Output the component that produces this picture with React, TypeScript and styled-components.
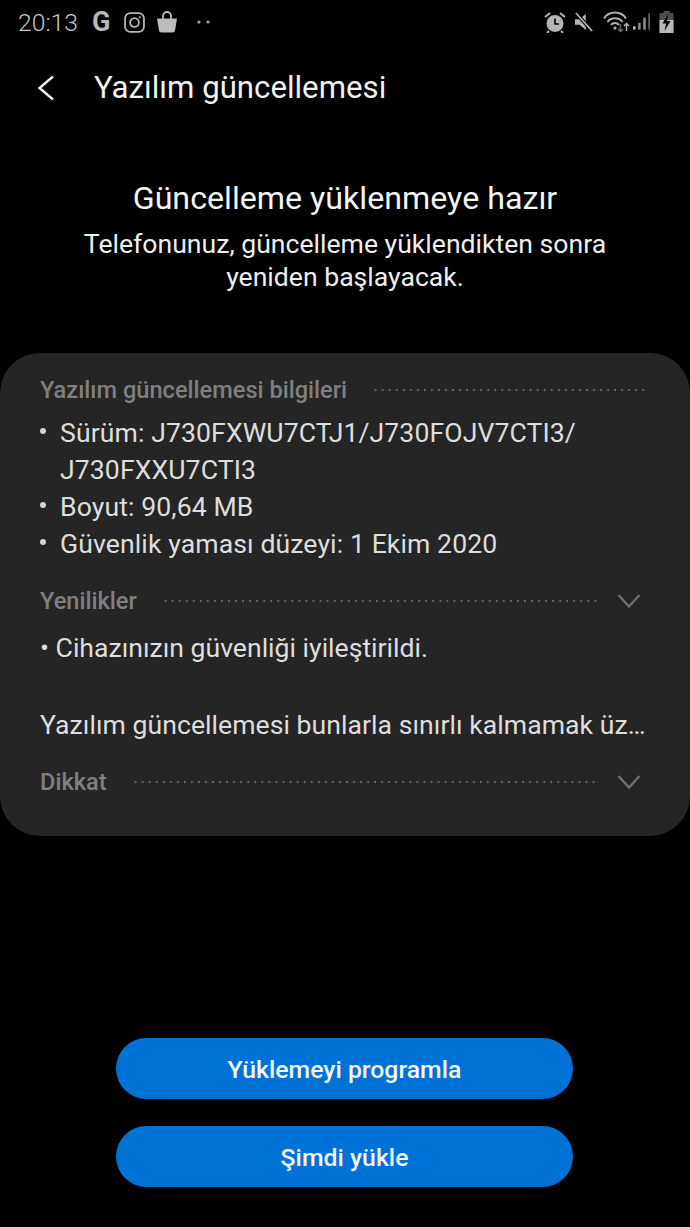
import React from "react";
import styled, { createGlobalStyle } from "styled-components";

const Global = createGlobalStyle`
  html, body { margin: 0; padding: 0; background: #000; }
  body { font-family: Roboto, "Liberation Sans", sans-serif; }
`;

const Page = styled.div`
  width: 690px; height: 1227px; background: #000; display: flex; flex-direction: column; overflow: hidden;
`;
const StatusBar = styled.div`
  height: 44px; display: flex; align-items: center; justify-content: space-between; padding: 0 16px 0 18px; color: #bdbdbd;
`;
const StatusGroup = styled.div`
  display: flex; align-items: center; gap: ${(p: { $gap: number }) => p.$gap}px;
`;
const Time = styled.span`
  font-size: 24.7px; font-weight: 300; color: #c8c8c8; margin-right: 2px;
`;
const GLetter = styled.span`
  font-size: 27px; font-weight: 700; color: #b8b8b8; line-height: 1; width: 20px;
`;
const TitleBar = styled.div`
  height: 88px; display: flex; align-items: center; padding-left: 35px; gap: 38px;
`;
const Title = styled.h1`
  margin: 0; font-size: 31.2px; font-weight: 400; color: #f2f2f2; line-height: 1;
`;
const Intro = styled.div`
  padding-top: 47px; text-align: center; color: #f5f5f5; height: 221px; box-sizing: border-box;
`;
const Heading = styled.div`
  font-size: 32.2px; line-height: 38px; margin-bottom: 10px;
`;
const IntroText = styled.div`
  font-size: 26.6px; line-height: 33px; color: #eee;
`;
const Card = styled.div`
  height: 483px; box-sizing: border-box; background: #252525; border-radius: 40px; padding: 24px 40px 0 40px; color: #dedede;
`;
const SectionHead = styled.div<{ $right: number; $top: number }>`
  display: flex; align-items: center; height: 26px;
  margin-right: ${(p) => p.$right}px;
  margin-top: ${(p) => p.$top}px;
`;
const SectionLabel = styled.span`
  font-size: 23.6px; font-weight: 500; color: #808080; white-space: nowrap;
`;
const Dots = styled.span`
  flex: 1; margin-left: 25px; height: 2px;
  background-image: radial-gradient(circle, #666 1px, transparent 1.2px);
  background-size: 7.05px 2px;
`;
const Chevron = styled.svg`
  width: 24px; height: 16px; margin-left: 19px; flex: none;
`;
const List = styled.ul`
  list-style: none; margin: 11px 0 0; padding: 0;
`;
const Item = styled.li`
  position: relative; padding-left: 20px; font-size: 26.6px; line-height: 37px; letter-spacing: 0.1px;
  &::before {
    content: ""; position: absolute; left: 0; top: 14px; width: 6px; height: 6px; border-radius: 50%; background: #d5d5d5;
  }
`;
const Body = styled.div<{ $top: number; $spacing: number }>`
  font-size: 26.6px; line-height: 36px; white-space: nowrap;
  letter-spacing: ${(p) => p.$spacing}px;
  margin-top: ${(p) => p.$top}px;
`;
const Actions = styled.div`
  margin-top: 202px; margin-right: 1px; display: flex; flex-direction: column; align-items: center; gap: 27px;
`;
const Button = styled.button`
  width: 457px; height: 61px; border: 0; border-radius: 31px; background: #0072d6; color: #f0f6fb;
  font-family: inherit; font-size: 24.8px; font-weight: 500; padding: 2px 0 0;
`;

const ChevronDown = () => (
  <Chevron viewBox="0 0 24 16" fill="none" stroke="#6f6f6f" strokeWidth="2.4">
    <path d="M1.5 2 L12 13.5 L22.500 2" />
  </Chevron>
);

export default function App() {
  return (
    <Page>
      <Global />
      <StatusBar>
        <StatusGroup $gap={12}>
          <Time>20:13</Time>
          <GLetter>G</GLetter>
          <svg width="21" height="21" viewBox="0 0 20 20" fill="none" stroke="#b8b8b8" strokeWidth="1.7">
            <rect x="1" y="1" width="18" height="18" rx="5" />
            <circle cx="10" cy="10" r="4.2" />
            <circle cx="15" cy="5" r="1" fill="#b8b8b8" stroke="none" />
          </svg>
          <svg width="20" height="22" viewBox="0 0 20 22" fill="#bcbcbc">
            <path d="M0 7.500h20l-2 12a2.500 2.500 0 0 1-2.500 2h-11a2.500 2.500 0 0 1-2.500-2z" />
            <path d="M6 8V5a4 4 0 0 1 8 0v3" fill="none" stroke="#bcbcbc" strokeWidth="1.8" />
          </svg>
          <svg width="16" height="4" viewBox="0 0 16 4" fill="#a8a8a8" style={{ marginLeft: 7 }}>
            <circle cx="3" cy="2" r="1.6" />
            <circle cx="12" cy="2" r="1.6" />
          </svg>
        </StatusGroup>
        <StatusGroup $gap={9}>
          <svg width="22" height="22" viewBox="0 0 22 22">
            <circle cx="11" cy="12.500" r="8.500" fill="#b4b4b4" />
            <path d="M11 7.500v5.500h4" fill="none" stroke="#000" strokeWidth="1.6" />
            <path d="M1 6l5-4M21 6l-5-4M5 20l-2 2M17 20l2 2" stroke="#b4b4b4" strokeWidth="2" />
          </svg>
          <svg width="18" height="22" viewBox="0 0 20 22">
            <path d="M0 8h5l7-6v18l-7-6H0z" fill="#b4b4b4" />
            <path d="M1 1l18 20" stroke="#000" strokeWidth="4" />
            <path d="M1 1l18 20" stroke="#b4b4b4" strokeWidth="2" />
          </svg>
          <svg width="28" height="22" viewBox="0 0 26 22" fill="none" stroke="#b4b4b4" strokeWidth="2">
            <path d="M1 7.500C6-.5 18-.5 23 7.500" />
            <path d="M4.500 11c3.500-5 11.500-5 15 0" />
            <path d="M8 14c2-2.600 6-2.600 8 0" />
            <circle cx="12" cy="17" r="1.600" fill="#b4b4b4" stroke="none" />
            <path d="M17.500 13v7M15 18l2.500 2.500L20 18" stroke="#6a6a6a" strokeWidth="1.500" />
            <path d="M23.500 20v-7M21 15l2.500-2.500L26 15" strokeWidth="1.500" />
          </svg>
          <svg width="17" height="22" viewBox="0 0 20 22" fill="#b4b4b4" style={{ marginLeft: -6 }}>
            <rect x="0" y="16" width="3" height="4" />
            <rect x="6" y="12" width="3" height="8" fill="#8a8a8a" />
            <rect x="12" y="6" width="3" height="14" fill="#8a8a8a" />
            <rect x="18" y="1" width="2" height="19" fill="#666" />
          </svg>
          <svg width="15" height="22" viewBox="0 0 14 22">
            <path d="M4 0h6v2h4v20H0V2h4z" fill="#4e4e4e" />
            <path d="M0 9h14v13H0z" fill="#b8b8b8" />
            <path d="M8.500 3L3 12.500h3.500L5 20l6-10H7.500z" fill="#000" />
          </svg>
        </StatusGroup>
      </StatusBar>
      <TitleBar>
        <svg width="21" height="26" viewBox="0 0 21 26" fill="none" stroke="#f2f2f2" strokeWidth="2.4">
          <path d="M18 1.500 L4.500 13 L18 24.500" />
        </svg>
        <Title>Yazılım güncellemesi</Title>
      </TitleBar>
      <Intro>
        <Heading>Güncelleme yüklenmeye hazır</Heading>
        <IntroText>
          Telefonunuz, güncelleme yüklendikten sonra
          <br />
          yeniden başlayacak.
        </IntroText>
      </Intro>
      <Card>
        <SectionHead $right={2} $top={0}>
          <SectionLabel>Yazılım güncellemesi bilgileri</SectionLabel>
          <Dots />
        </SectionHead>
        <List>
          <Item>
            Sürüm: J730FXWU7CTJ1/J730FOJV7CTI3/
            <br />
            J730FXXU7CTI3
          </Item>
          <Item>Boyut: 90,64 MB</Item>
          <Item>Güvenlik yaması düzeyi: 1 Ekim 2020</Item>
        </List>
        <SectionHead $right={9} $top={26}>
          <SectionLabel>Yenilikler</SectionLabel>
          <Dots />
          <ChevronDown />
        </SectionHead>
        <Body $top={16} $spacing={0}>• Cihazınızın güvenliği iyileştirildi.</Body>
        <Body $top={41} $spacing={0.04}>Yazılım güncellemesi bunlarla sınırlı kalmamak üz…</Body>
        <SectionHead $right={9} $top={26}>
          <SectionLabel>Dikkat</SectionLabel>
          <Dots />
          <ChevronDown />
        </SectionHead>
      </Card>
      <Actions>
        <Button>Yüklemeyi programla</Button>
        <Button>Şimdi yükle</Button>
      </Actions>
    </Page>
  );
}
